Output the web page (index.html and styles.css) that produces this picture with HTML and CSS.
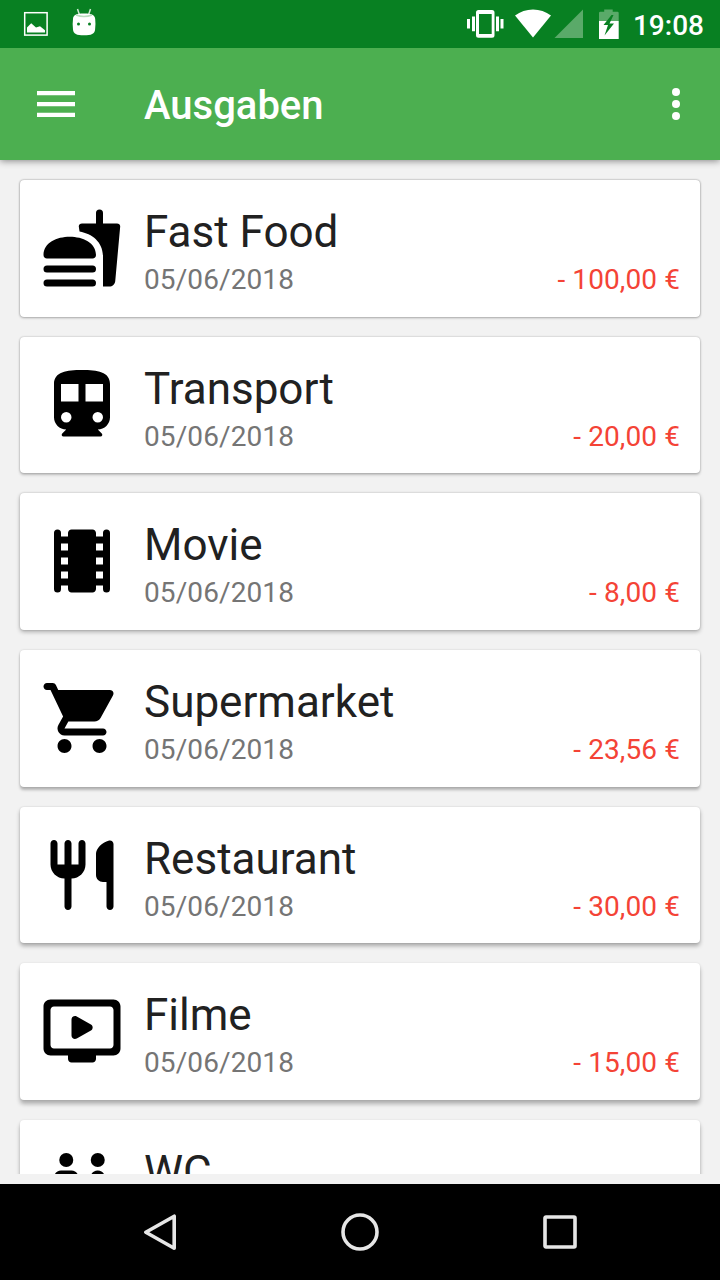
FILE: index.html
```html
<!DOCTYPE html>
<html lang="de">
<head>
<meta charset="utf-8">
<title>Ausgaben</title>
<link rel="stylesheet" href="styles.css">
</head>
<body>
<div class="screen">
  <div class="status-bar">
    <svg class="status-left" width="110" height="48" viewBox="0 0 110 48">
      <rect x="24.7" y="12.7" width="22.4" height="22.4" fill="none" stroke="#fff" stroke-width="1.5"/>
      <path d="M27 32.5V27.5l4.2-4.2 4.8 4.2 4-1.2 5 4v2.2z" fill="#fff"/>
      <path d="M77.5 9l2 6M90.5 9l-2 6" stroke="#cfe8d2" stroke-width="1.5"/>
      <path d="M73 19c.3-4 3-5.500 11-5.500s10.800 1.500 11.200 5.500q.6 5-.1 10.500C94.700 34 91.500 35.300 84 35.300S73.400 34 73 29.500q-.7-5.500 0-10.500z" fill="#fff"/>
      <path d="M76 15q8 3 16 0" fill="none" stroke="#b9dcbd" stroke-width="1.600"/>
      <circle cx="78.500" cy="24" r="1.500" fill="#088022"/><circle cx="89.500" cy="24" r="1.500" fill="#088022"/>
    </svg>
    <div class="status-right">
      <svg width="160" height="48" viewBox="464 0 160 48">
        <g fill="#fff">
          <path fill-rule="evenodd" d="M478.500 10h13.500q2.500 0 2.500 2.500v22.700q0 2.500-2.500 2.500h-13.500q-2.500 0-2.500-2.500V12.500q0-2.500 2.500-2.500zM479 14v20h12.700V14z"/>
          <path d="M467 19h3v9.500h-3zM472 16.500h3v14.700h-3zM496 16.500h3v14.700h-3zM500.500 19h3v9.500h-3z"/>
          <path d="M515 15.500Q523 9.500 533 9.500t18 6L533 37.500z"/>
        </g>
        <path d="M583 9.500V38h-28.500z" fill="#5aaa69"/>
        <path d="M599 21v-8q0-1.200 1.200-1.200h4V9.500h8.500v2.300h4.800q1.200 0 1.200 1.200v8z" fill="#5aaa69"/>
        <path d="M599 21h19.700v18H599z" fill="#fff"/>
        <path d="M611.500 15l-8 10h4.500l-3.500 10.500 9.500-12h-4.500l4-8.500z" fill="#088022"/>
      </svg>
      <span class="clock">19:08</span>
    </div>
  </div>

  <div class="app-bar">
    <svg class="menu" width="38" height="26" viewBox="0 0 38 26"><path d="M0 0h38v4.300H0zM0 11h38v4.300H0zM0 21.700h38V26H0z" fill="#fff"/></svg>
    <h1 class="title">Ausgaben</h1>
    <svg class="more" width="8" height="32" viewBox="0 0 8 32" fill="#fff"><circle cx="4" cy="4" r="4"/><circle cx="4" cy="16" r="4"/><circle cx="4" cy="28" r="4"/></svg>
  </div>

  <div class="content">
    <div class="list">
      <div class="card depth-1">
        <svg class="icon" viewBox="0 0 24 24"><path d="M1 14C1 10.500 4.800 8.800 8.500 8.800S16 10.500 16 14c0 .6-.4 1-1 1H2c-.6 0-1-.4-1-1zM2 17h13a1 1 0 0 1 0 2H2a1 1 0 0 1 0-2zM2 21h13a1 1 0 0 1 0 2H2a1 1 0 0 1 0-2zM18 23v-8.500C18 10.300 15 8 11.300 7.300L11.100 6C11 5.400 11.400 5 12 5h4V2a1 1 0 0 1 2 0v3h4c.6 0 1 .4.900 1l-1.400 15.400C21.400 22.400 20.700 23 19.800 23z"/></svg>
        <div class="body"><div class="name">Fast Food</div><div class="meta"><span class="date">05/06/2018</span><span class="amount">- 100,00 €</span></div></div>
      </div>
      <div class="card depth-2">
        <svg class="icon" viewBox="0 0 24 24"><path d="M12 2c-4.420 0-8 .5-8 4v9.500C4 17.430 5.570 19 7.500 19l-1.150 1.150c-.32.320-.1.850.35.850h10.600c.45 0 .67-.54.350-.85L16.500 19c1.930 0 3.500-1.570 3.500-3.500V6c0-3.500-3.580-4-8-4zM7.500 17a1.500 1.500 0 1 1 0-3 1.500 1.500 0 0 1 0 3zM11 11H6V6h5zM16.500 17a1.500 1.500 0 1 1 0-3 1.500 1.500 0 0 1 0 3zM18 11h-5V6h5z"/></svg>
        <div class="body"><div class="name">Transport</div><div class="meta"><span class="date">05/06/2018</span><span class="amount">- 20,00 €</span></div></div>
      </div>
      <div class="card depth-3">
        <svg class="icon" viewBox="0 0 24 24"><path d="M18 4v1h-2V4c0-.55-.45-1-1-1H9c-.55 0-1 .45-1 1v1H6V4a1 1 0 0 0-2 0v16a1 1 0 0 0 2 0v-1h2v1c0 .55.450 1 1 1h6c.55 0 1-.45 1-1v-1h2v1a1 1 0 0 0 2 0V4a1 1 0 0 0-2 0zM8 17H6v-2h2zM8 13H6v-2h2zM8 9H6V7h2zM18 17h-2v-2h2zM18 13h-2v-2h2zM18 9h-2V7h2z"/></svg>
        <div class="body"><div class="name">Movie</div><div class="meta"><span class="date">05/06/2018</span><span class="amount">- 8,00 €</span></div></div>
      </div>
      <div class="card depth-4">
        <svg class="icon" viewBox="0 0 24 24"><path d="M7 18c-1.100 0-1.990.9-1.990 2S5.900 22 7 22s2-.9 2-2-.9-2-2-2zM1 3c0 .55.450 1 1 1h1l3.600 7.590-1.350 2.440C4.520 15.370 5.480 17 7 17h11c.55 0 1-.45 1-1s-.45-1-1-1H7l1.100-2h7.450c.75 0 1.410-.41 1.750-1.030l3.580-6.490c.37-.66-.11-1.480-.87-1.480H5.210l-.67-1.430c-.16-.35-.52-.57-.9-.57H2c-.55 0-1 .45-1 1zm16 15c-1.100 0-1.990.9-1.990 2s.89 2 1.990 2 2-.9 2-2-.9-2-2-2z"/></svg>
        <div class="body"><div class="name">Supermarket</div><div class="meta"><span class="date">05/06/2018</span><span class="amount">- 23,56 €</span></div></div>
      </div>
      <div class="card depth-5">
        <svg class="icon" viewBox="0 0 24 24"><path d="M16 6v6c0 1.100.9 2 2 2h1v7c0 .55.450 1 1 1s1-.45 1-1V3.130c0-.65-.61-1.130-1.240-.98C17.600 2.680 16 4.510 16 6zm-5 3H9V3c0-.55-.45-1-1-1s-1 .45-1 1v6H5V3c0-.55-.45-1-1-1s-1 .45-1 1v6c0 2.210 1.790 4 4 4v8c0 .55.450 1 1 1s1-.45 1-1v-8c2.210 0 4-1.790 4-4V3c0-.55-.45-1-1-1s-1 .45-1 1v6z"/></svg>
        <div class="body"><div class="name">Restaurant</div><div class="meta"><span class="date">05/06/2018</span><span class="amount">- 30,00 €</span></div></div>
      </div>
      <div class="card depth-6">
        <svg class="icon" viewBox="0 0 24 24"><path fill-rule="evenodd" d="M21 3H3c-1.110 0-2 .89-2 2v12c0 1.100.89 2 2 2h5v1c0 .55.450 1 1 1h6c.55 0 1-.45 1-1v-1h5c1.100 0 2-.9 2-2V5c0-1.110-.9-2-2-2zm-1 14H4c-.55 0-1-.45-1-1V6c0-.55.450-1 1-1h16c.55 0 1 .45 1 1v10c0 .55-.45 1-1 1zM9 8.700v4.600c0 .75.800 1.200 1.500.85l4.050-2.300c.66-.4.660-1.320 0-1.700L10.500 7.850C9.800 7.450 9 7.950 9 8.700z"/></svg>
        <div class="body"><div class="name">Filme</div><div class="meta"><span class="date">05/06/2018</span><span class="amount">- 15,00 €</span></div></div>
      </div>
      <div class="card depth-6">
        <svg class="icon" viewBox="0 0 24 24"><circle cx="7.500" cy="4" r="2"/><circle cx="16.500" cy="4" r="2"/><path d="M5.500 21v-6.500H5c-.55 0-1-.45-1-1V9c0-1.100.9-2 2-2h3c1.100 0 2 .9 2 2v4.500c0 .55-.45 1-1 1h-.5V21c0 .55-.45 1-1 1h-2c-.55 0-1-.45-1-1zM18 21v-5h1.600c.7 0 1.200-.7.950-1.300l-2.100-6.330C18.180 7.550 17.420 7 16.560 7h-.12c-.86 0-1.630.55-1.900 1.370l-2.100 6.330c-.25.600.25 1.300.95 1.300H15v5c0 .55.450 1 1 1h1c.55 0 1-.45 1-1z"/></svg>
        <div class="body"><div class="name">WC</div></div>
      </div>
    </div>
  </div>

  <div class="nav-bar">
    <svg width="40" height="40" viewBox="0 0 40 40"><path d="M5.800 20.200L34.200 4.200v32z"/></svg>
    <svg width="40" height="40" viewBox="0 0 40 40"><circle cx="20" cy="20" r="17"/></svg>
    <svg width="40" height="40" viewBox="0 0 40 40"><rect x="5" y="5" width="30" height="30" rx="1"/></svg>
  </div>
</div>
</body>
</html>
```
FILE: styles.css
```css
body {
  margin: 0;
  font-family: Roboto, "Noto Sans", sans-serif;
}
.screen {
  width: 720px;
  height: 1280px;
  display: flex;
  flex-direction: column;
  overflow: hidden;
  background: #f2f2f2;
}
.status-bar {
  height: 48px;
  flex: none;
  display: flex;
  justify-content: space-between;
  background: #088022;
  z-index: 2;
}
.status-right {
  display: flex;
  align-items: center;
  padding-right: 16px;
}
.clock {
  width: 80px;
  text-align: right;
  color: #fff;
  font-size: 28px;
  font-weight: 500;
  line-height: 48px;
  padding-top: 3px;
}
.app-bar {
  height: 112px;
  flex: none;
  box-sizing: border-box;
  display: flex;
  align-items: center;
  padding: 0 40px 0 37px;
  background: #4caf50;
  box-shadow: 0 1px 7px rgba(0, 0, 0, 0.45);
  z-index: 1;
}
.title {
  flex: 1;
  margin: 3px 0 0 69px;
  color: #fff;
  font-size: 40px;
  font-weight: 500;
}
.content {
  height: 1024px;
  flex: none;
  box-sizing: border-box;
  padding-bottom: 10px;
}
.list {
  height: 100%;
  box-sizing: border-box;
  overflow: hidden;
  display: flex;
  flex-direction: column;
  gap: 20px;
  padding: 20px 20px 0;
}
.card {
  flex: none;
  height: 136.7px;
  box-sizing: border-box;
  display: flex;
  align-items: center;
  padding: 0 20px;
  border-radius: 4px;
  background: #fff;
}
.depth-1 { box-shadow: 0 0 2px rgba(0, 0, 0, 0.4), 0 1px 3px rgba(0, 0, 0, 0.2); }
.depth-2 { box-shadow: 0 0 2px rgba(0, 0, 0, 0.3), 0 2px 3px rgba(0, 0, 0, 0.22); }
.depth-3 { box-shadow: 0 0 2px rgba(0, 0, 0, 0.22), 0 2px 4px rgba(0, 0, 0, 0.28); }
.depth-4 { box-shadow: 0 0 2px rgba(0, 0, 0, 0.18), 0 3px 3px rgba(0, 0, 0, 0.26); }
.depth-5 { box-shadow: 0 0 2px rgba(0, 0, 0, 0.14), 0 3px 4px rgba(0, 0, 0, 0.3); }
.depth-6 { box-shadow: 0 0 2px rgba(0, 0, 0, 0.1), 0 4px 4px rgba(0, 0, 0, 0.28); }
.icon {
  width: 84px;
  height: 84px;
  flex: none;
  margin-bottom: 1px;
}
.body {
  flex: 1;
  height: 95px;
  padding-left: 20px;
}
.name {
  height: 62px;
  line-height: 62px;
  color: #212121;
  font-size: 44px;
}
.meta {
  display: flex;
  justify-content: space-between;
  line-height: 34px;
  font-size: 28px;
  letter-spacing: 0.1px;
}
.date { color: #757575; }
.amount { color: #f44336; }
.nav-bar {
  flex: 1;
  display: flex;
  justify-content: center;
  align-items: center;
  gap: 160px;
  background: #000;
}
.nav-bar svg {
  fill: none;
  stroke: #e6e6e6;
  stroke-width: 3.6;
  stroke-linejoin: round;
}
```
